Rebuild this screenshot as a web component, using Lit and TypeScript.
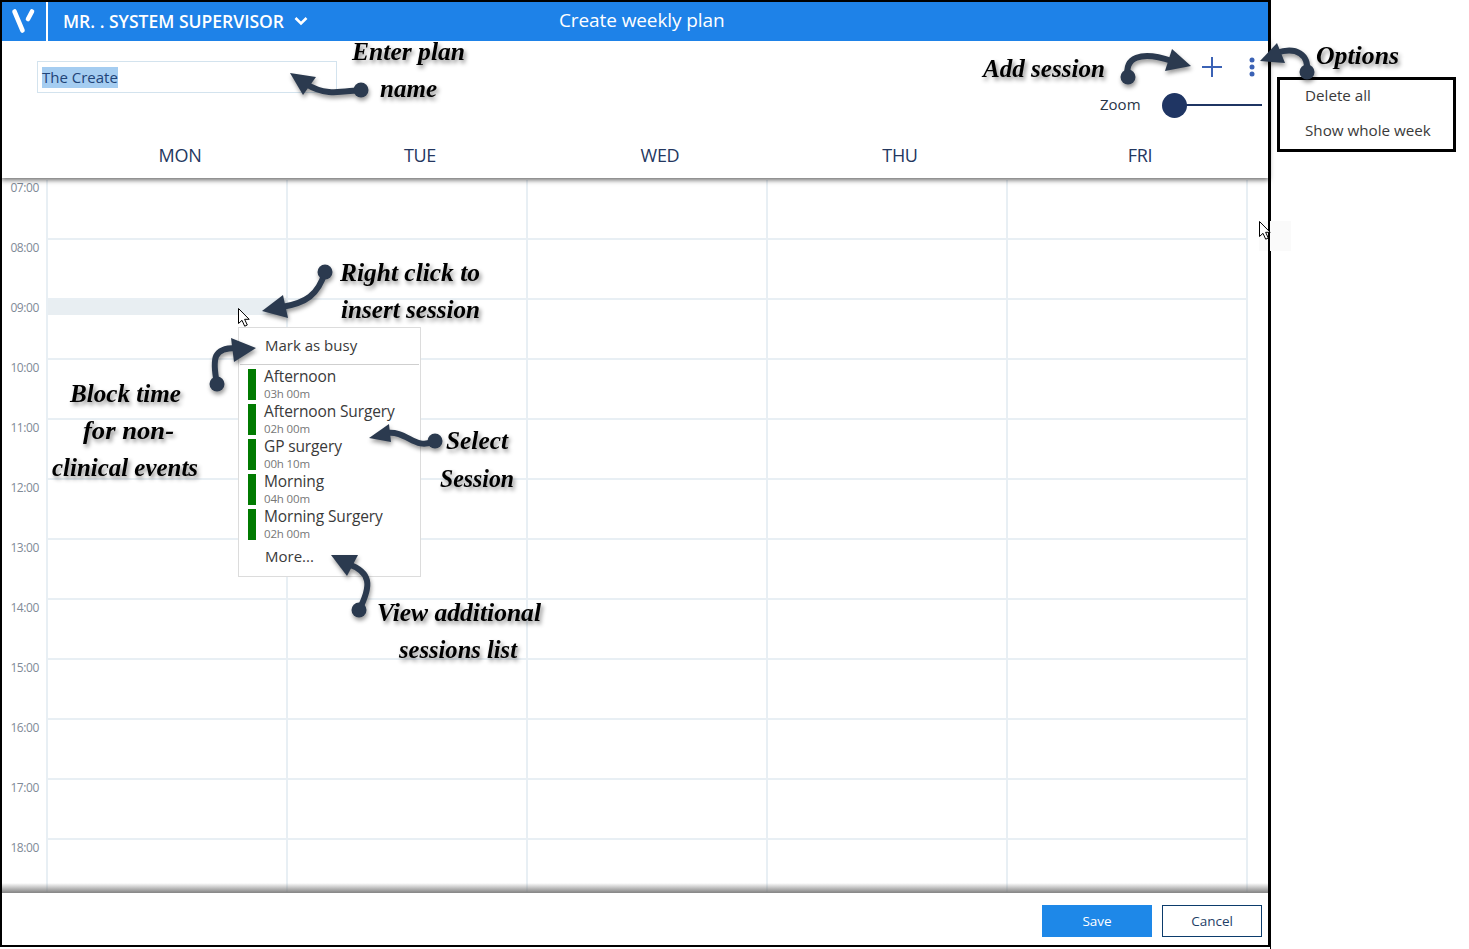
import { LitElement, html, css, svg } from "lit";
import { customElement } from "lit/decorators.js";

const HOURS = ["07:00","08:00","09:00","10:00","11:00","12:00","13:00","14:00","15:00","16:00","17:00","18:00"];
const DAYS = ["MON","TUE","WED","THU","FRI"];
const SESSIONS = [
  ["Afternoon","03h 00m"],["Afternoon Surgery","02h 00m"],["GP surgery","00h 10m"],["Morning","04h 00m"],["Morning Surgery","02h 00m"],
];
// [text, left x, right x, baseline y]
const NOTES: [string, number, number, number][] = [
  ["Enter plan",352,465,60],["name",380,437,97],["Add session",983,1105,77],["Options",1316,1399,64],
  ["Right click to",340,480,281],["insert session",341,480,318],["Block time",70,181,402],["for non-",83,174,439],
  ["clinical events",52,198,476],["Select",446,508,449],["Session",440,514,487],["View additional",377,541,621],["sessions list",399,517,658],
];
// [shaft path, tail x, tail y, head points]
const ARROWS: [string, number, number, string][] = [
  ["M361 90C343 91 327 97 306 84",361,90,"290,73 316,77 303,95"],
  ["M1128 77C1124 58 1140 50 1172 61",1128,77,"1191,66 1172,49 1165,71"],
  ["M1307 72C1309 55 1297 46 1276 53",1307,72,"1260,61 1277,43 1285,63"],
  ["M325 272C318 295 306 303 282 307",325,272,"262,311 283,295 288,318"],
  ["M217 384C212 358 213 347 238 348",217,384,"256,348 231,338 234,362"],
  ["M435 441C414 451 408 430 386 433",435,441,"369,438 389,424 391,442"],
  ["M359 610C372 585 371 572 348 564",359,610,"331,555 358,555 347,576"],
];
const cursor = (x: number, y: number) => svg`<path transform="translate(${x} ${y})" d="M.5.5V15.5L4 12.3 6.7 18.2 9.3 17 6.6 11.3H11.2Z" fill="#fff" stroke="#000" stroke-width="1"/>`;

@customElement("app-root")
export class AppRoot extends LitElement {
  static styles = css`
    :host { display:block; position:relative; width:1469px; height:949px; background:#fff; overflow:hidden; font-family:"Open Sans","Noto Sans",sans-serif; }
    .page { display:flex; align-items:flex-start; height:949px; }
    .rail { width:1271px; height:949px; box-sizing:border-box; border-right:1px solid #000; flex:none; }
    .frame { position:relative; box-sizing:border-box; width:1270px; height:947px; border:2px solid #000; display:flex; flex-direction:column; }
    .bar { height:39px; background:#1e82e8; color:#fff; display:flex; align-items:center; flex:none; position:relative; z-index:3; }
    .logo { width:44px; height:39px; border-right:2px solid #fff; flex:none; }
    .logo svg { display:block; }
    .who { width:511px; box-sizing:border-box; padding:0 0 2px 15px; display:flex; align-items:center; gap:10px; font-size:17.5px; font-weight:600; }
    .title { font-size:19px; letter-spacing:-.1px; padding-bottom:3px; }
    .tools { height:137px; flex:none; background:#fff; box-shadow:0 1px 5px 1px rgba(0,0,0,.6); position:relative; z-index:2; display:flex; flex-direction:column; }
    .top { height:97px; display:flex; justify-content:space-between; flex:none; }
    .name { margin:20px 0 0 35px; width:300px; height:32px; box-sizing:border-box; border:1px solid #d3e3ee; padding:5px 4px 0; font-size:15px; line-height:21px; color:#1f4478; }
    .name span { display:inline-block; background:#a5cdf1; }
    .ctl { width:290px; display:flex; flex-direction:column; }
    .icons { display:flex; justify-content:flex-end; align-items:center; height:50px; padding-right:13px; gap:26px; margin-top:1px; flex:none; }
    .icons svg { display:block; }
    .zoom { display:flex; align-items:center; font-size:15px; color:#2a3547; padding-left:122px; height:26px; flex:none; }
    .zoom span { width:62px; padding-bottom:2px; }
    .knob { width:25px; height:25px; border-radius:50%; background:#1f3563; flex:none; }
    .track { width:76px; height:2px; background:#1f3563; margin-left:-1px; }
    .days { display:flex; padding-left:58px; height:34px; align-items:center; }
    .days div { width:240px; text-align:center; font-size:18px; letter-spacing:-.3px; color:#24375f; }
    .grid { flex:1; min-height:0; overflow:hidden; padding-top:2px; display:grid; grid-template-columns:46px repeat(5,240px) 20px; grid-auto-rows:60px; position:relative; }
    .time { box-sizing:border-box; border-right:2px solid #e8eff4; padding:0 7px 0 0; text-align:right; font-size:12px; line-height:16px; color:#7f8a97; letter-spacing:-.4px; }
    .cell { box-sizing:border-box; border-right:2px solid #e8eff4; border-bottom:2px solid #e8eff4; position:relative; }
    .hot { display:block; height:15px; background:#e8eef2; }
    .foot { height:53px; flex:none; background:#fff; display:flex; justify-content:flex-end; align-items:flex-start; gap:10px; padding:12px 6px 0 0; box-sizing:border-box; position:relative; z-index:2; border-top:1px solid #8a8a8a; }
    .fade { position:absolute; left:0; right:0; bottom:53px; height:9px; z-index:1; background:linear-gradient(to bottom,rgba(120,120,120,0),rgba(120,120,120,.85)); }
    .btn { box-sizing:border-box; height:32px; display:flex; align-items:center; justify-content:center; font-size:13.5px; }
    .save { width:110px; background:#1e88e8; color:#fff; }
    .cancel { width:100px; border:1px solid #0c3c6c; background:#fff; color:#1f3f68; }
    .menu { position:absolute; left:236px; top:325px; width:183px; height:250px; box-sizing:border-box; background:#fff; border:1px solid #dcdcdc; z-index:2; color:#3a3a3a; }
    .busy { height:37px; box-sizing:border-box; margin:0 1px; padding-left:25px; border-bottom:1px solid #cfcfcf; font-size:15px; line-height:34px; }
    .items { padding:4px 0 0 9px; display:flex; flex-direction:column; gap:4px; }
    .item { display:flex; height:31px; gap:8px; }
    .item i { width:8px; background:#007a00; flex:none; }
    .item b { display:block; font-weight:400; font-size:15.5px; line-height:17px; margin-top:-1px; white-space:nowrap; letter-spacing:-.13px; }
    .item small { display:block; font-size:11.5px; line-height:16px; color:#777; letter-spacing:-.15px; margin-top:1px; }
    .more { padding-left:26px; font-size:15px; line-height:20px; margin-top:6px; }
    .opts { box-sizing:border-box; margin:77px 0 0 6px; width:179px; height:75px; border:3px solid #000; padding:0 0 0 25px; font-size:15.2px; line-height:35px; color:#3a3a3a; flex:none; }
    .opts div { margin-top:-2px; }
    .ghost { position:absolute; left:1259px; top:221px; width:32px; height:30px; background:#fafafa; }
    .over { position:absolute; left:0; top:0; z-index:5; pointer-events:none; }
    .arr { filter:drop-shadow(1px 3px 2px rgba(0,0,0,.4)); }
    .note { font-family:"Liberation Serif",serif; font-style:italic; font-weight:700; font-size:25px; fill:#000; filter:drop-shadow(2px 3px 2px rgba(0,0,0,.45)); }
  `;
  render() {
    return html`
      <div class="ghost"></div>
      <div class="page">
        <div class="rail"><div class="frame">
          <div class="bar">
            <div class="logo"><svg width="44" height="39" viewBox="0 0 44 39"><path d="M12.500 9.500L20.500 28.500" stroke="#fff" stroke-width="4.600" stroke-linecap="round"/><path d="M30 9.500L26 17" stroke="#fff" stroke-width="4.600" stroke-linecap="round"/></svg></div>
            <div class="who">MR. . SYSTEM SUPERVISOR
              <svg width="14" height="10" viewBox="0 0 14 10"><path d="M1.500 2L7 7.500 12.500 2" fill="none" stroke="#fff" stroke-width="2.600"/></svg>
            </div>
            <div class="title">Create weekly plan</div>
          </div>
          <div class="tools">
            <div class="top">
              <div class="name"><span>The Create</span></div>
              <div class="ctl">
                <div class="icons">
                  <svg width="22" height="22" viewBox="0 0 22 22"><path d="M11 1V21M1 11H21" stroke="#3b62b5" stroke-width="2"/></svg>
                  <svg width="6" height="20" viewBox="0 0 6 20"><circle cx="3" cy="3" r="2.500" fill="#3b62b5"/><circle cx="3" cy="10" r="2.500" fill="#3b62b5"/><circle cx="3" cy="17" r="2.500" fill="#3b62b5"/></svg>
                </div>
                <div class="zoom"><span>Zoom</span><div class="knob"></div><div class="track"></div></div>
              </div>
            </div>
            <div class="days">${DAYS.map(d => html`<div>${d}</div>`)}</div>
          </div>
          <div class="grid">
            ${HOURS.map((h, r) => html`<div class="time">${h}</div>${DAYS.map((_, c) => html`<div class="cell">${r === 2 && c === 0 ? html`<span class="hot"></span>` : ""}</div>`)}<div></div>`)}
          </div>
          <div class="fade"></div>
          <div class="menu">
            <div class="busy">Mark as busy</div>
            <div class="items">${SESSIONS.map(s => html`<div class="item"><i></i><div><b>${s[0]}</b><small>${s[1]}</small></div></div>`)}</div>
            <div class="more">More...</div>
          </div>
          <div class="foot"><div class="btn save">Save</div><div class="btn cancel">Cancel</div></div>
        </div></div>
        <div class="opts"><div>Delete all<br>Show whole week</div></div>
      </div>
      <svg class="over" width="1469" height="949" viewBox="0 0 1469 949">
        ${cursor(238, 308)}${cursor(1259, 221)}
        <g class="arr">${ARROWS.map(a => svg`<path d=${a[0]} fill="none" stroke="#2b3a4f" stroke-width="6"/><circle cx=${a[1]} cy=${a[2]} r="7.500" fill="#2b3a4f"/><polygon points=${a[3]} fill="#2b3a4f"/>`)}</g>
        <g>${NOTES.map(n => svg`<text class="note" x=${n[1]} y=${n[3]} textLength=${n[2] - n[1]} lengthAdjust="spacingAndGlyphs">${n[0]}</text>`)}</g>
      </svg>
    `;
  }
}
